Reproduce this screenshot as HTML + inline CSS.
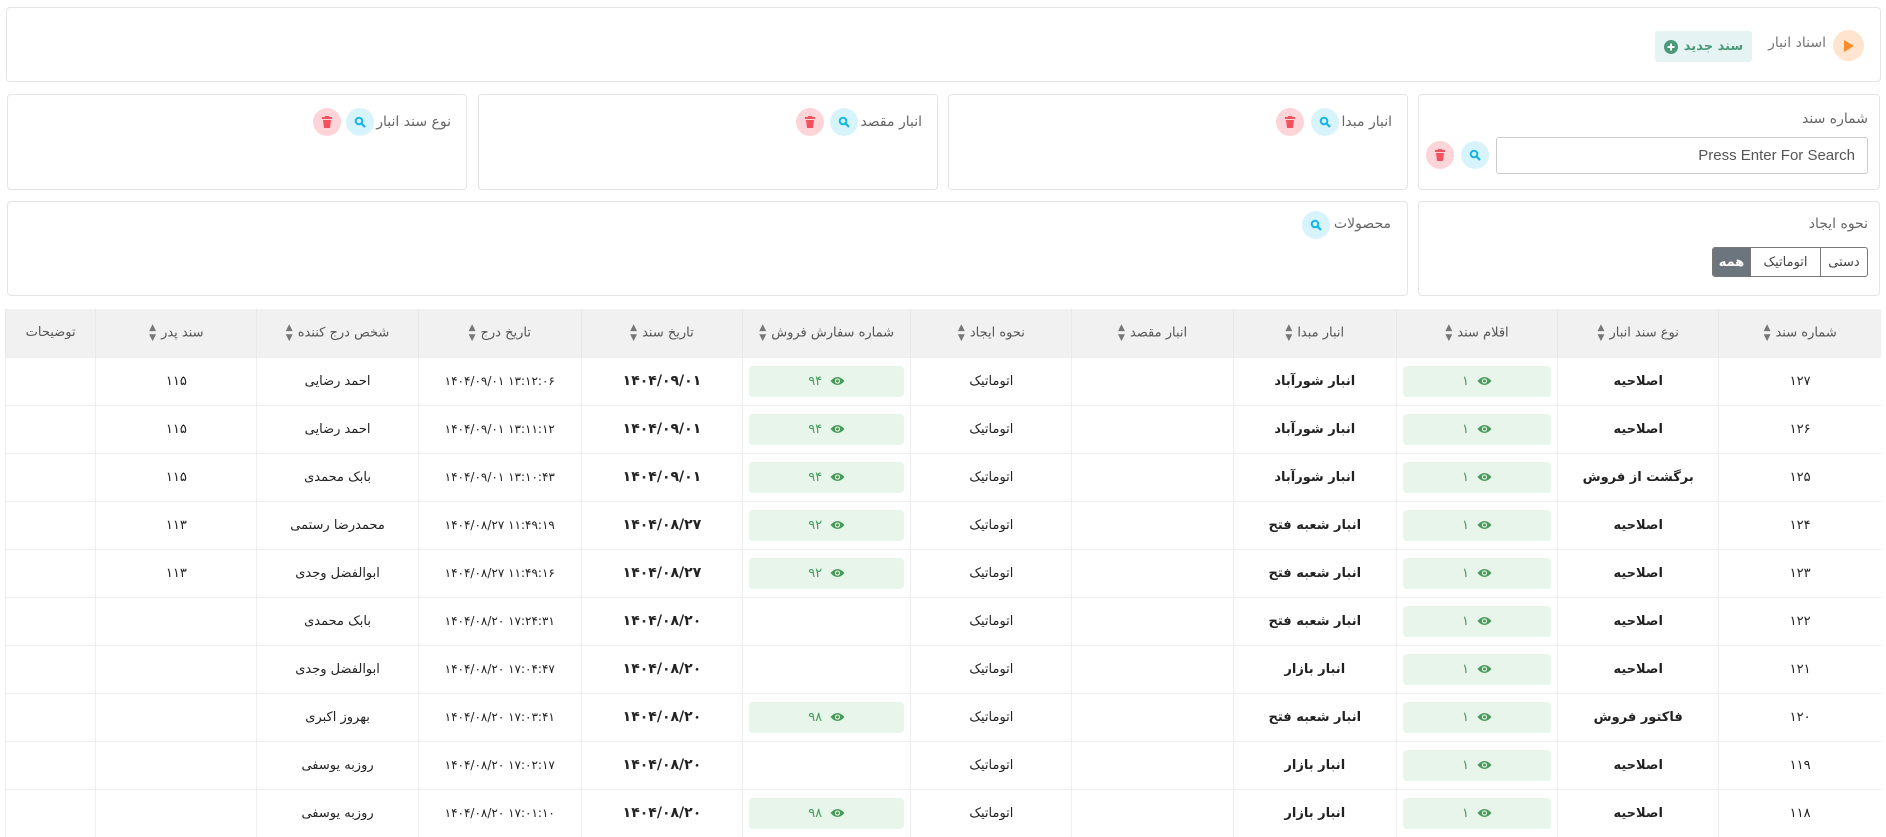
<!DOCTYPE html>
<html lang="fa" dir="rtl"><head><meta charset="utf-8">
<style>
*{box-sizing:border-box;margin:0;padding:0}
body{width:1886px;height:800px;overflow:hidden;background:#fff;font-family:"DejaVu Sans","Liberation Sans",sans-serif;color:#222;position:relative}
.card{position:absolute;border:1px solid #e4e4e4;border-radius:4px;background:#fff}
.lbl{position:absolute;font-size:14px;color:#666;white-space:nowrap}
.ic{position:absolute;width:28px;height:28px;border-radius:50%;display:flex;align-items:center;justify-content:center}
.s{background:#d7f4fc}.t{background:#fdd5d8}
table{position:absolute;left:5px;top:309px;width:1876px;border-collapse:collapse;table-layout:fixed}
th{background:#f1f1f1;height:48px;font-size:13px;color:#555;font-weight:normal;border-left:1px solid #e8e8e8;white-space:nowrap}
td{height:48px;font-size:13px;text-align:center;border-top:1px solid #eee;border-left:1px solid #eee;white-space:nowrap}
.b{font-weight:bold}
.bd{background:#e7f5ea;color:#4a9a5a;border-radius:4px;height:31px;margin:0 6px;display:flex;align-items:center;justify-content:center;gap:8px;font-size:13px}
.ltr{direction:ltr;unicode-bidi:isolate;display:inline-block}
.so{display:inline-block;color:#777;font-size:9px;margin-right:5px;vertical-align:middle}
</style></head><body>
<div class="card" style="left:6px;top:7px;width:1875px;height:75px"></div>
<div style="position:absolute;left:1833px;top:30px;width:31px;height:31px;border-radius:50%;background:#ffe4cf;display:flex;align-items:center;justify-content:center"><svg width="12" height="14"><path d="M1 1L11 7L1 13Z" fill="#fb8c2c"/></svg></div>
<div class="lbl" style="right:60px;top:35px;font-size:14px;color:#777">اسناد انبار</div>
<div style="position:absolute;left:1655px;top:31px;width:97px;height:31px;background:#e5f4f3;border-radius:3px;display:flex;align-items:center;justify-content:center;gap:6px;color:#4a9a7a;font-size:13px;font-weight:bold;direction:rtl">سند جدید <svg width="14" height="14"><circle cx="7" cy="7" r="7" fill="#4a9a7a"/><path d="M7 3.5V10.5M3.5 7H10.5" stroke="#fff" stroke-width="2"/></svg></div>

<div class="card" style="left:1418px;top:94px;width:462px;height:96px"></div>
<div class="lbl" style="right:18px;top:111px">شماره سند</div>
<div style="position:absolute;left:1496px;top:137px;width:372px;height:37px;border:1px solid #ccc;border-radius:3px;font-size:15px;color:#555;text-align:right;padding:9px 12px;direction:ltr;font-family:'Liberation Sans',sans-serif">Press Enter For Search</div>
<div class="ic s" style="left:1461px;top:141px"><svg width="12" height="12"><circle cx="5" cy="5" r="3.3" fill="none" stroke="#12b5e8" stroke-width="2"/><path d="M7.5 7.5L11 11" stroke="#12b5e8" stroke-width="2.2"/></svg></div>
<div class="ic t" style="left:1426px;top:141px"><svg width="10" height="12"><path d="M0 2H10M3 1H7" stroke="#f4515f" stroke-width="2"/><path d="M1 4H9L8 12H2Z" fill="#f4515f"/></svg></div>

<div class="card" style="left:948px;top:94px;width:460px;height:96px"></div>
<div class="lbl" style="right:494px;top:114px">انبار مبدا</div>
<div class="card" style="left:478px;top:94px;width:460px;height:96px"></div>
<div class="lbl" style="right:964px;top:114px">انبار مقصد</div>
<div class="card" style="left:7px;top:94px;width:460px;height:96px"></div>
<div class="lbl" style="right:1435px;top:114px">نوع سند انبار</div>

<div class="card" style="left:1418px;top:201px;width:462px;height:95px"></div>
<div class="lbl" style="right:18px;top:216px">نحوه ایجاد</div>
<div style="position:absolute;left:1712px;top:247px;width:156px;height:30px;border:1px solid #777;border-radius:3px;display:flex;direction:rtl;font-size:13px;overflow:hidden">
<div style="width:47px;display:flex;align-items:center;justify-content:center;border-left:1px solid #777;color:#444">دستی</div>
<div style="width:70px;display:flex;align-items:center;justify-content:center;border-left:1px solid #777;color:#444">اتوماتیک</div>
<div style="flex:1;display:flex;align-items:center;justify-content:center;background:#6c757d;color:#fff;font-weight:bold">همه</div></div>
<div class="card" style="left:7px;top:201px;width:1401px;height:95px"></div>
<div class="lbl" style="right:495px;top:216px">محصولات</div>

<table><colgroup><col style="width:162px"><col style="width:161px"><col style="width:161px"><col style="width:163px"><col style="width:161px"><col style="width:161px"><col style="width:168px"><col style="width:161px"><col style="width:163px"><col style="width:161px"><col style="width:161px"><col style="width:90px"></colgroup>
<thead><tr><th>شماره سند<span class="so">▲<br>▼</span></th><th>نوع سند انبار<span class="so">▲<br>▼</span></th><th>اقلام سند<span class="so">▲<br>▼</span></th><th>انبار مبدا<span class="so">▲<br>▼</span></th><th>انبار مقصد<span class="so">▲<br>▼</span></th><th>نحوه ایجاد<span class="so">▲<br>▼</span></th><th>شماره سفارش فروش<span class="so">▲<br>▼</span></th><th>تاریخ سند<span class="so">▲<br>▼</span></th><th>تاریخ درج<span class="so">▲<br>▼</span></th><th>شخص درج کننده<span class="so">▲<br>▼</span></th><th>سند پدر<span class="so">▲<br>▼</span></th><th>توضیحات</th></tr></thead>
<tbody id="tb"></tbody></table>
<script>
const eye='<svg width="15" height="10"><path d="M0.5 5Q7.5 -3 14.5 5Q7.5 13 0.5 5Z" fill="#4a9a5a"/><circle cx="7.5" cy="5" r="2.6" fill="#e7f5ea"/><circle cx="7.5" cy="5" r="1.5" fill="#4a9a5a"/></svg>';
const bd=n=>n?'<div class="bd">'+eye+'<span>'+n+'</span></div>':'';
const R=[["۱۲۷","اصلاحیه","انبار شورآباد","۹۴","۱۴۰۴/۰۹/۰۱","۱۳:۱۲:۰۶","احمد رضایی","۱۱۵"],
["۱۲۶","اصلاحیه","انبار شورآباد","۹۴","۱۴۰۴/۰۹/۰۱","۱۳:۱۱:۱۲","احمد رضایی","۱۱۵"],
["۱۲۵","برگشت از فروش","انبار شورآباد","۹۴","۱۴۰۴/۰۹/۰۱","۱۳:۱۰:۴۳","بابک محمدی","۱۱۵"],
["۱۲۴","اصلاحیه","انبار شعبه فتح","۹۲","۱۴۰۴/۰۸/۲۷","۱۱:۴۹:۱۹","محمدرضا رستمی","۱۱۳"],
["۱۲۳","اصلاحیه","انبار شعبه فتح","۹۲","۱۴۰۴/۰۸/۲۷","۱۱:۴۹:۱۶","ابوالفضل وجدی","۱۱۳"],
["۱۲۲","اصلاحیه","انبار شعبه فتح","","۱۴۰۴/۰۸/۲۰","۱۷:۲۴:۳۱","بابک محمدی",""],
["۱۲۱","اصلاحیه","انبار بازار","","۱۴۰۴/۰۸/۲۰","۱۷:۰۴:۴۷","ابوالفضل وجدی",""],
["۱۲۰","فاکتور فروش","انبار شعبه فتح","۹۸","۱۴۰۴/۰۸/۲۰","۱۷:۰۳:۴۱","بهروز اکبری",""],
["۱۱۹","اصلاحیه","انبار بازار","","۱۴۰۴/۰۸/۲۰","۱۷:۰۲:۱۷","روزبه یوسفی",""],
["۱۱۸","اصلاحیه","انبار بازار","۹۸","۱۴۰۴/۰۸/۲۰","۱۷:۰۱:۱۰","روزبه یوسفی",""]];
let h='';for(const r of R){h+='<tr><td>'+r[0]+'</td><td class="b">'+r[1]+'</td><td>'+bd('۱')+'</td><td class="b">'+r[2]+'</td><td></td><td>اتوماتیک</td><td>'+bd(r[3])+'</td><td class="b" style="font-size:14px"><span class="ltr">'+r[4]+'</span></td><td style="font-size:12px"><span class="ltr">'+r[4]+' '+r[5]+'</span></td><td>'+r[6]+'</td><td>'+r[7]+'</td><td></td></tr>';}
document.getElementById('tb').innerHTML=h;
</script>
<div class="ic s" style="left:830px;top:108px"><svg width="12" height="12"><circle cx="5" cy="5" r="3.3" fill="none" stroke="#12b5e8" stroke-width="2"/><path d="M7.5 7.5L11 11" stroke="#12b5e8" stroke-width="2.2"/></svg></div>
<div class="ic t" style="left:796px;top:108px"><svg width="10" height="12"><path d="M0 2H10M3 1H7" stroke="#f4515f" stroke-width="2"/><path d="M1 4H9L8 12H2Z" fill="#f4515f"/></svg></div>
<div class="ic s" style="left:1311px;top:108px"><svg width="12" height="12"><circle cx="5" cy="5" r="3.3" fill="none" stroke="#12b5e8" stroke-width="2"/><path d="M7.5 7.5L11 11" stroke="#12b5e8" stroke-width="2.2"/></svg></div>
<div class="ic t" style="left:1276px;top:108px"><svg width="10" height="12"><path d="M0 2H10M3 1H7" stroke="#f4515f" stroke-width="2"/><path d="M1 4H9L8 12H2Z" fill="#f4515f"/></svg></div>
<div class="ic s" style="left:346px;top:108px"><svg width="12" height="12"><circle cx="5" cy="5" r="3.3" fill="none" stroke="#12b5e8" stroke-width="2"/><path d="M7.5 7.5L11 11" stroke="#12b5e8" stroke-width="2.2"/></svg></div>
<div class="ic t" style="left:313px;top:108px"><svg width="10" height="12"><path d="M0 2H10M3 1H7" stroke="#f4515f" stroke-width="2"/><path d="M1 4H9L8 12H2Z" fill="#f4515f"/></svg></div>
<div class="ic s" style="left:1302px;top:211px"><svg width="12" height="12"><circle cx="5" cy="5" r="3.3" fill="none" stroke="#12b5e8" stroke-width="2"/><path d="M7.5 7.5L11 11" stroke="#12b5e8" stroke-width="2.2"/></svg></div>
</body></html>
